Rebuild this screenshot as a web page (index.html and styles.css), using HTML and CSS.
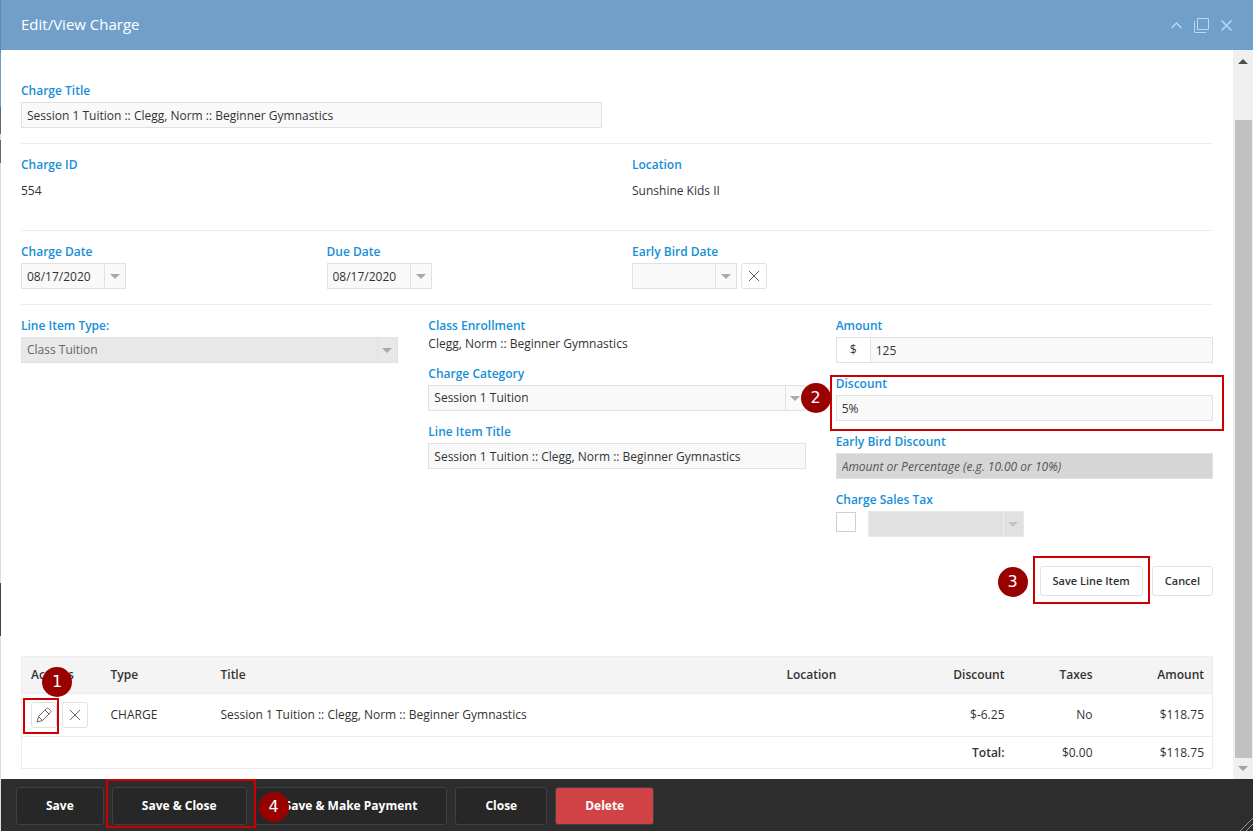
FILE: index.html
```html
<!DOCTYPE html>
<html lang="en">
<head>
    <meta charset="UTF-8">
    <meta name="viewport" content="width=device-width, initial-scale=1.0">
    <title>Edit/View Charge</title>
    <link rel="stylesheet" href="styles.css">
</head>
<body>
    <div class="window">
        <header class="windowHeader">
            <h1>Edit/View Charge</h1>
            <div class="windowTools">
                <button type="button" aria-label="Collapse"><svg width="15" height="15" viewBox="0 0 15 15"><path stroke-width="1.5" d="M2.500 10L7.500 5L12.500 10"/></svg></button>
                <button type="button" aria-label="Maximize"><svg width="15" height="15" viewBox="0 0 15 15"><path d="M3.5 .5h11v11h-11zM.5 3v11.500h11.500"/></svg></button>
                <button type="button" aria-label="Close window"><svg width="15" height="15" viewBox="0 0 15 15"><path stroke-width="1.5" d="M2.500 2.500l10 10M12.500 2.500l-10 10"/></svg></button>
            </div>
        </header>

        <div class="windowBody">
            <main class="content">
                <section class="row">
                    <div class="field half">
                        <label for="chargeTitle">Charge Title</label>
                        <input type="text" id="chargeTitle" value="Session 1 Tuition :: Clegg, Norm :: Beginner Gymnastics">
                    </div>
                </section>

                <section class="row">
                    <div class="field half">
                        <h2>Charge ID</h2>
                        <p class="value">554</p>
                    </div>
                    <div class="field half">
                        <h2>Location</h2>
                        <p class="value">Sunshine Kids II</p>
                    </div>
                </section>

                <section class="row">
                    <div class="field">
                        <label for="chargeDate">Charge Date</label>
                        <div class="datePicker">
                            <input type="text" id="chargeDate" value="08/17/2020">
                            <button type="button" class="trigger" aria-label="Pick charge date"></button>
                        </div>
                    </div>
                    <div class="field">
                        <label for="dueDate">Due Date</label>
                        <div class="datePicker">
                            <input type="text" id="dueDate" value="08/17/2020">
                            <button type="button" class="trigger" aria-label="Pick due date"></button>
                        </div>
                    </div>
                    <div class="field">
                        <label for="earlyBirdDate">Early Bird Date</label>
                        <div class="dateLine">
                            <div class="datePicker">
                                <input type="text" id="earlyBirdDate">
                                <button type="button" class="trigger" aria-label="Pick early bird date"></button>
                            </div>
                            <button type="button" class="iconButton" aria-label="Clear early bird date"><svg width="12" height="12" viewBox="0 0 12 12"><path d="M1 1l10 10M11 1L1 11"/></svg></button>
                        </div>
                    </div>
                </section>

                <section class="lineItem">
                    <div class="column">
                        <div class="field">
                            <label for="lineItemType">Line Item Type:</label>
                            <div class="selectBox readonly">
                                <select id="lineItemType" disabled><option>Class Tuition</option></select>
                            </div>
                        </div>
                    </div>
                    <div class="column">
                        <div class="field">
                            <h2 class="tight">Class Enrollment</h2>
                            <p>Clegg, Norm :: Beginner Gymnastics</p>
                        </div>
                        <div class="field">
                            <label for="chargeCategory">Charge Category</label>
                            <div class="selectBox">
                                <select id="chargeCategory"><option>Session 1 Tuition</option></select>
                            </div>
                        </div>
                        <div class="field">
                            <label for="lineItemTitle">Line Item Title</label>
                            <input type="text" id="lineItemTitle" value="Session 1 Tuition :: Clegg, Norm :: Beginner Gymnastics">
                        </div>
                    </div>
                    <div class="column">
                        <div class="field">
                            <label for="amount">Amount</label>
                            <div class="moneyBox">
                                <span>$</span>
                                <input type="text" id="amount" value="125">
                            </div>
                        </div>
                        <div class="field marked">
                            <label for="discount">Discount</label>
                            <input type="text" id="discount" value="5%">
                            <span class="outline outlineField"></span>
                            <span class="step stepField">2</span>
                        </div>
                        <div class="field">
                            <label for="earlyBirdDiscount">Early Bird Discount</label>
                            <input type="text" id="earlyBirdDiscount" placeholder="Amount or Percentage (e.g. 10.00 or 10%)" disabled>
                        </div>
                        <div class="field">
                            <label for="salesTax">Charge Sales Tax</label>
                            <div class="taxLine">
                                <input type="checkbox" id="salesTax">
                                <div class="selectBox off">
                                    <select aria-label="Sales tax rate" disabled><option></option></select>
                                </div>
                            </div>
                        </div>
                    </div>
                </section>

                <div class="lineButtons">
                    <div class="marked">
                        <button type="button" class="button">Save Line Item</button>
                        <span class="outline outlineButton"></span>
                        <span class="step stepButton">3</span>
                    </div>
                    <button type="button" class="button">Cancel</button>
                </div>

                <table class="items">
                    <thead>
                        <tr>
                            <th class="colActions">Actions</th>
                            <th class="colType">Type</th>
                            <th>Title</th>
                            <th class="colLocation">Location</th>
                            <th class="colDiscount number">Discount</th>
                            <th class="colTaxes number">Taxes</th>
                            <th class="colAmount number">Amount</th>
                        </tr>
                    </thead>
                    <tbody>
                        <tr>
                            <td>
                                <div class="actions">
                                    <div class="marked">
                                        <button type="button" class="iconButton" aria-label="Edit line item"><svg width="16" height="16" viewBox="0 0 16 16"><path d="M1 15l1.500-5.500L10.500 1.500Q11.500 .5 12.500 1.500L14.500 3.500Q15.500 4.500 14.500 5.500L6.500 13.500zM2.500 9.500l4 4M9 3l4 4"/></svg></button>
                                        <span class="outline outlineIcon"></span>
                                        <span class="step stepIcon">1</span>
                                    </div>
                                    <button type="button" class="iconButton" aria-label="Remove line item"><svg width="12" height="12" viewBox="0 0 12 12"><path d="M1 1l10 10M11 1L1 11"/></svg></button>
                                </div>
                            </td>
                            <td>CHARGE</td>
                            <td>Session 1 Tuition :: Clegg, Norm :: Beginner Gymnastics</td>
                            <td></td>
                            <td class="number">$-6.25</td>
                            <td class="number">No</td>
                            <td class="number">$118.75</td>
                        </tr>
                    </tbody>
                    <tfoot>
                        <tr>
                            <th colspan="5" class="number">Total:</th>
                            <td class="number">$0.00</td>
                            <td class="number">$118.75</td>
                        </tr>
                    </tfoot>
                </table>
            </main>

            <div class="scrollbar" aria-hidden="true">
                <span class="scrollUp"></span>
                <span class="scrollThumb"></span>
                <span class="scrollDown"></span>
            </div>
        </div>

        <footer class="windowFooter">
            <button type="button">Save</button>
            <div class="marked">
                <button type="button">Save &amp; Close</button>
                <span class="outline outlineFooter"></span>
                <span class="step stepFooter">4</span>
            </div>
            <button type="button">Save &amp; Make Payment</button>
            <button type="button">Close</button>
            <button type="button" class="delete">Delete</button>
            <svg class="resizer" width="13" height="13" viewBox="0 0 13 13"><path d="M0 13L13 0M6 13L13 6"/></svg>
        </footer>
    </div>
</body>
</html>
```

FILE: styles.css
```css
* {
    box-sizing: border-box;
}
body {
    margin: 0;
    /* page behind the window, visible along the left edge */
    background: linear-gradient(#6389ac 0 53px, #6fa0ca 53px 107px, #666 107px 134px, #ddd 134px 140px, #666 140px 163px, #ddd 163px 583px, #444 583px 636px, #ddd 636px);
    color: #333;
    font: 12px/18px "Open Sans", sans-serif;
}
input, select, button {
    font: inherit;
    color: inherit;
}
button {
    padding: 0;
    cursor: pointer;
}
h1, h2, p {
    margin: 0;
}
svg {
    display: block;
    fill: none;
    stroke: currentColor;
}

.window {
    display: flex;
    flex-direction: column;
    min-height: 100vh;
    margin-left: 1px;
    background: #fff;
}
.windowHeader {
    display: flex;
    align-items: center;
    justify-content: space-between;
    height: 50px;
    padding: 0 19px 0 20px;
    background: #709fca;
    color: #fff;
}
.windowHeader h1 {
    padding-bottom: 2px;
    font-size: 15px;
    font-weight: 400;
    line-height: 20px;
}
.windowTools {
    display: flex;
    gap: 10px;
}
.windowTools button {
    border: 0;
    background: none;
    color: #b9d9f2;
}

.windowBody {
    display: flex;
    flex: 1;
}
.content {
    flex: 1;
    padding: 20px 20px 10px;
}

/* form rows */
.row {
    display: grid;
    grid-template-columns: repeat(4, 1fr);
    gap: 30px;
    padding: 12px 0 15px;
    border-bottom: 1px solid #ededed;
}
.half {
    grid-column: span 2;
}
.field label, .field h2 {
    display: block;
    margin-bottom: 2px;
    color: #158fd7;
    font-size: 12px;
    font-weight: 600;
    line-height: 18px;
}
.field .tight {
    margin-bottom: 0;
}
.value {
    padding: 6px 0 15px;
}
input[type="text"], select {
    display: block;
    width: 100%;
    height: 26px;
    padding: 0 5px;
    border: 1px solid #e1e1e1;
    border-radius: 0;
    background: #f9f9f9;
}
.datePicker {
    display: flex;
    width: 105px;
}
.trigger {
    flex: none;
    width: 21px;
    height: 26px;
    border: 1px solid #e1e1e1;
    border-left: 0;
    background: #f9f9f9;
}
.trigger::before, .selectBox::after {
    content: "";
    display: block;
    width: 0;
    margin: 0 auto;
    border: 5px solid transparent;
    border-top-color: #a9a9a9;
    border-bottom: 0;
}
.dateLine {
    display: flex;
    gap: 4px;
}
.iconButton {
    display: flex;
    align-items: center;
    justify-content: center;
    width: 26px;
    height: 26px;
    border: 1px solid #e1e1e1;
    border-radius: 3px;
    background: #fff;
    color: #666;
}

/* line item editor */
.lineItem {
    display: grid;
    grid-template-columns: repeat(3, 1fr);
    gap: 30px;
    padding-top: 12px;
}
.column {
    display: flex;
    flex-direction: column;
    gap: 12px;
}
.selectBox {
    position: relative;
}
.selectBox select {
    appearance: none;
    opacity: 1;
}
.selectBox::before {
    content: "";
    position: absolute;
    top: 1px;
    bottom: 1px;
    right: 20px;
    border-left: 1px solid #e1e1e1;
}
.selectBox::after {
    position: absolute;
    top: 11px;
    right: 6px;
    pointer-events: none;
}
.readonly select {
    background: #e8e8e8;
    color: #666;
}
.off {
    width: 156px;
}
.off select {
    border-color: #e8e8e8;
    background: #e1e1e1;
}
.off::before {
    border-color: #eee;
}
.off::after {
    border-top-color: #c4c4c4;
}
.moneyBox {
    display: flex;
}
.moneyBox span {
    flex: none;
    width: 34px;
    border: 1px solid #e1e1e1;
    border-right: 0;
    line-height: 24px;
    text-align: center;
}
#earlyBirdDiscount {
    background: #d6d6d6;
}
#earlyBirdDiscount::placeholder {
    color: #555;
    font-style: italic;
}
.taxLine {
    display: flex;
    align-items: flex-start;
    gap: 12px;
}
input[type="checkbox"] {
    appearance: none;
    width: 20px;
    height: 20px;
    margin: 1px 0;
    border: 1px solid #d0d0d0;
    background: #fff;
}
.lineButtons {
    display: flex;
    justify-content: flex-end;
    gap: 9px;
    margin: 29px 0 60px;
}
.button {
    height: 30px;
    padding: 0 12px;
    border: 1px solid #e1e1e1;
    border-radius: 3px;
    background: #fff;
    font-size: 11px;
    font-weight: 600;
}

/* items table */
.items {
    width: 100%;
    border: 1px solid #ededed;
    border-collapse: collapse;
    table-layout: fixed;
}
.items th, .items td {
    padding: 0 8px 0 9px;
    text-align: left;
}
.items th {
    font-weight: 600;
}
.items .number {
    text-align: right;
}
.items tr {
    height: 37px;
    border-bottom: 1px solid #ededed;
}
.items thead {
    background: #f4f4f4;
}
.items tbody tr {
    height: 43px;
}
.items tfoot tr {
    height: 32px;
}
.colActions {
    width: 80px;
}
.colType {
    width: 110px;
}
.colLocation {
    width: 120px;
}
.colDiscount {
    width: 115px;
}
.colTaxes {
    width: 88px;
}
.colAmount {
    width: 112px;
}
.actions {
    display: flex;
    gap: 5px;
}

/* scrollbar */
.scrollbar {
    display: flex;
    flex-direction: column;
    align-items: center;
    width: 20px;
    padding: 9px 0 8px;
    background: #f0f0f0;
}
.scrollUp, .scrollDown {
    border: 5px solid transparent;
}
.scrollUp {
    border-top: 0;
    border-bottom-color: #505050;
}
.scrollDown {
    border-bottom: 0;
    border-top-color: #a3a3a3;
}
.scrollThumb {
    flex: 1;
    width: 17px;
    margin: 56px 0 8px;
    background: #c1c1c1;
}

.windowFooter {
    position: relative;
    display: flex;
    gap: 8px;
    padding: 8px 15px 6px;
    background: #2d2d2d;
}
.windowFooter button {
    height: 38px;
    padding: 0 29px;
    border: 1px solid #404040;
    border-radius: 3px;
    background: #272727;
    color: #fff;
    font-weight: 700;
}
.windowFooter .delete {
    background: #d14246;
}
.resizer {
    position: absolute;
    right: 0;
    bottom: 0;
    color: #999;
}

/* numbered steps over the controls */
.marked {
    position: relative;
}
.outline {
    position: absolute;
    border: 2px solid #c00;
    pointer-events: none;
}
.step {
    position: absolute;
    z-index: 1;
    width: 30px;
    height: 30px;
    border-radius: 50%;
    background: #900;
    color: #fff;
    font: 16px/30px "DejaVu Sans", sans-serif;
    text-align: center;
}
.outlineField {
    inset: 0 -11px -10px -6px;
}
.stepField {
    top: 8px;
    left: -35px;
}
.outlineButton {
    inset: -10px -7px -8px -7px;
}
.stepButton {
    top: 1px;
    left: -42px;
}
.outlineIcon {
    inset: -4px -2px -6px -8px;
}
.stepIcon {
    top: -35px;
    left: 11px;
}
.outlineFooter {
    inset: -8px -9px -3px -6px;
}
.stepFooter {
    top: 5px;
    right: -42px;
}
```
